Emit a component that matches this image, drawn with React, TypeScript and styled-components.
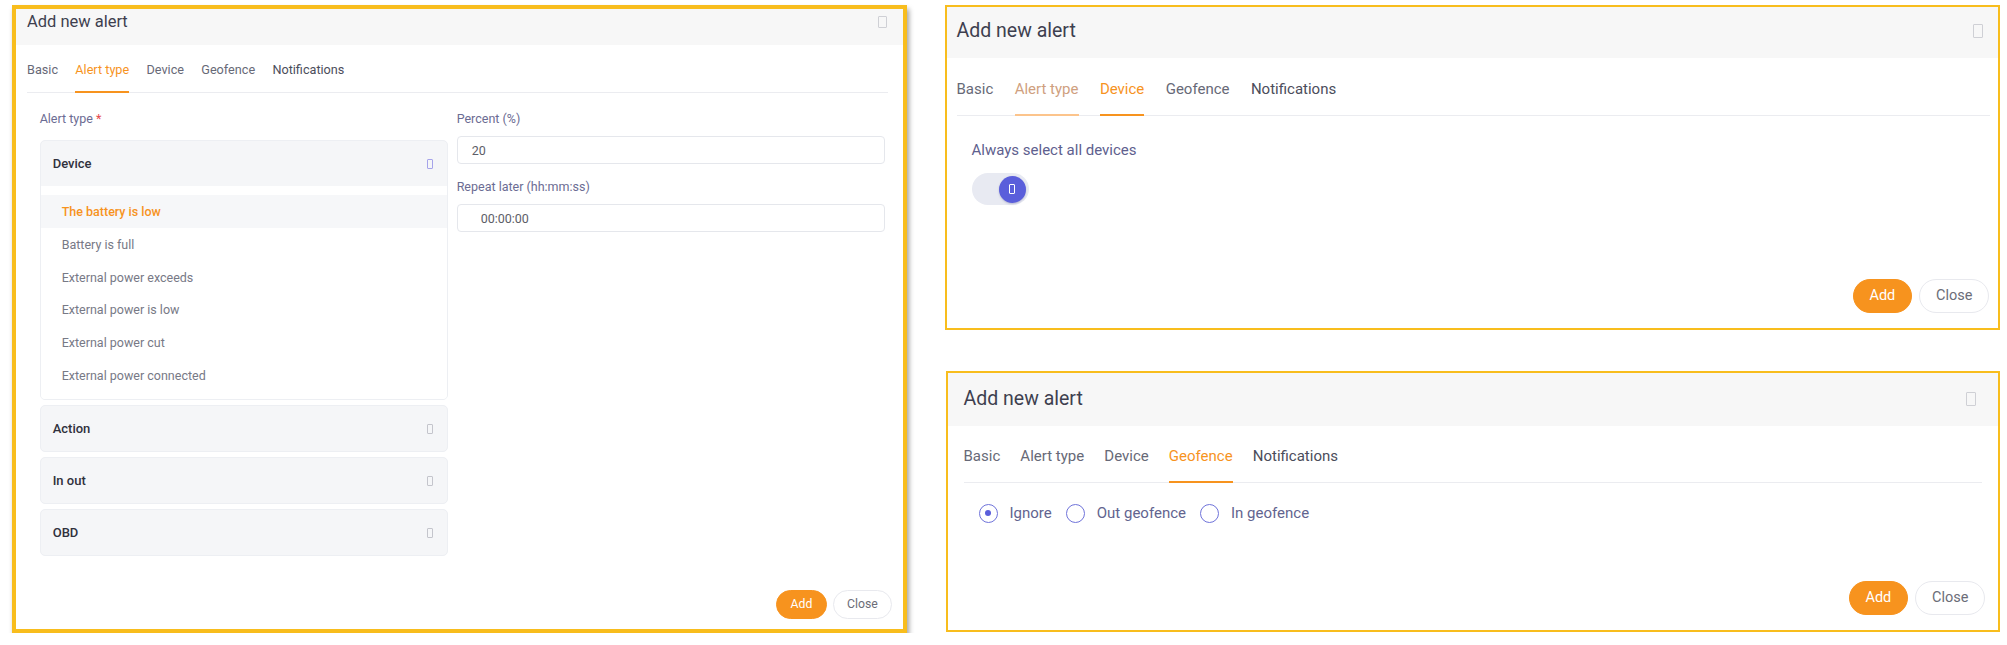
import React from "react";
import styled, { createGlobalStyle } from "styled-components";

const GlobalStyle = createGlobalStyle`
  html, body { margin: 0; padding: 0; background: #ffffff; }
  body { font-family: Roboto, "Noto Sans", Arial, sans-serif; -webkit-font-smoothing: antialiased; }
  * { box-sizing: border-box; }
`;

const u = (n: number) => `calc(var(--s) * ${n}px)`;

type Layout = {
  s: number; w: number; h: number; border: number; headerH: number; titleShift: number;
  padL: number; divR: number; iconR: number; footR: number; footB: number;
  tabTop: number; tabGap: number; bodyTop: number; shadow?: boolean;
};

const Page = styled.div`
  display: flex;
  align-items: flex-start;
  gap: 38px;
  padding: 5px 0 0 12px;
`;

const RightColumn = styled.div`
  display: flex;
  flex-direction: column;
  align-items: flex-end;
  gap: 41px;
`;

const Frame = styled.section<{ $l: Layout }>`
  --s: ${(p) => p.$l.s};
  width: ${(p) => p.$l.w}px;
  height: ${(p) => p.$l.h}px;
  border: ${(p) => p.$l.border}px solid #f8bd1d;
  background: #fff;
  display: flex;
  flex-direction: column;
  box-shadow: ${(p) => (p.$l.shadow ? "2px 4px 5px rgba(0,0,0,0.38)" : "none")};
`;

const Header = styled.header<{ $l: Layout }>`
  height: ${(p) => p.$l.headerH}px;
  flex: none;
  background: #f7f7f7;
  display: flex;
  align-items: center;
  justify-content: space-between;
  padding: 0 ${(p) => p.$l.iconR}px ${(p) => p.$l.titleShift}px ${(p) => p.$l.padL}px;
`;

const Title = styled.h2`
  margin: 0;
  font-size: ${u(19.5)};
  line-height: 1.2;
  font-weight: 400;
  color: #3e3f4f;
`;

const CloseGlyph = styled.span`
  width: ${u(10.5)};
  height: ${u(13.5)};
  border: 1.5px solid #cfd0d5;
  border-radius: 1px;
  display: block;
`;

const TabBar = styled.nav<{ $l: Layout }>`
  flex: none;
  display: flex;
  gap: ${(p) => p.$l.tabGap}px;
  margin: ${(p) => p.$l.tabTop}px ${(p) => p.$l.divR}px 0 ${(p) => p.$l.padL}px;
  border-bottom: 1px solid #ebecf0;
`;

const Tab = styled.span<{ $state: "idle" | "active" | "fading"; $strong?: boolean }>`
  font-size: ${u(15)};
  line-height: ${u(17.5)};
  padding-bottom: ${u(15.7)};
  margin-bottom: -1px;
  border-bottom: 2px solid
    ${(p) => (p.$state === "active" ? "#f7931e" : p.$state === "fading" ? "#fcc48c" : "transparent")};
  color: ${(p) =>
    p.$state === "active" ? "#f7931e" : p.$state === "fading" ? "#cf9f80" : p.$strong ? "#4b4d5b" : "#676977"};
`;

const Body = styled.div<{ $l: Layout }>`
  flex: 1;
  padding: ${(p) => p.$l.bodyTop}px 0 0 calc(${(p) => p.$l.padL}px + ${u(15)});
`;

const Footer = styled.footer<{ $l: Layout }>`
  flex: none;
  display: flex;
  justify-content: flex-end;
  gap: ${u(7.5)};
  padding: 0 ${(p) => p.$l.footR}px ${(p) => p.$l.footB}px 0;
`;

const PillButton = styled.button<{ $primary?: boolean }>`
  height: ${u(34.5)};
  padding: 0 ${u(15.6)};
  border-radius: 999px;
  font-family: Roboto, Arial, sans-serif;
  font-size: ${u(14.5)};
  border: 1px solid ${(p) => (p.$primary ? "#f7931e" : "#e8e9ee")};
  background: ${(p) => (p.$primary ? "#f7931e" : "#ffffff")};
  color: ${(p) => (p.$primary ? "#ffffff" : "#6b6d78")};
  cursor: pointer;
`;

/* ---------- Alert type tab (left) ---------- */

const FormGrid = styled.div`
  display: grid;
  grid-template-columns: 408px 428px;
  column-gap: 9px;
  align-items: start;
`;

const Column = styled.div`
  display: flex;
  flex-direction: column;
`;

const FieldLabel = styled.label<{ $gap: number }>`
  font-size: 12.5px;
  line-height: 15px;
  color: #6b6c93;
  margin-bottom: ${(p) => p.$gap}px;
  display: block;
`;

const Required = styled.span`
  color: #e5484d;
  margin-left: 3px;
`;

const TextInput = styled.div<{ $indent: number }>`
  height: 28px;
  border: 1px solid #e5e7ec;
  border-radius: 4px;
  padding-left: ${(p) => p.$indent}px;
  display: flex;
  align-items: center;
  font-size: 12.5px;
  color: #5d5e68;
  margin-bottom: 15px;
`;

const Accordion = styled.div`
  display: flex;
  flex-direction: column;
  gap: 5px;
`;

const Section = styled.div`
  border: 1px solid #edeff3;
  border-radius: 5px;
  overflow: hidden;
  background: #f5f6f8;
`;

const SectionHeader = styled.div`
  height: 45px;
  display: flex;
  align-items: center;
  justify-content: space-between;
  padding: 0 14px 0 12px;
  font-size: 13px;
  font-weight: 500;
  color: #30313d;
`;

const ToggleGlyph = styled.span<{ $open?: boolean }>`
  width: 6px;
  height: 10px;
  border: 1px solid ${(p) => (p.$open ? "#a6a4ea" : "#c4c5cc")};
  border-radius: 1px;
  display: block;
`;

const List = styled.ul`
  list-style: none;
  margin: 0;
  padding: 9px 0 8px;
  background: #fff;
`;

const Item = styled.li<{ $active?: boolean }>`
  height: 32.7px;
  display: flex;
  align-items: center;
  padding-left: 21px;
  font-size: 12.5px;
  font-weight: ${(p) => (p.$active ? 500 : 400)};
  color: ${(p) => (p.$active ? "#f7931e" : "#777986")};
  background: ${(p) => (p.$active ? "#f6f7f9" : "transparent")};
`;

/* ---------- Device tab (top right) ---------- */

const PlainLabel = styled.div`
  font-size: 15px;
  line-height: 17.5px;
  color: #5e608e;
  margin-bottom: 14px;
`;

const Switch = styled.div`
  width: 57px;
  height: 32px;
  border-radius: 16px;
  background: #e8eaf2;
  display: flex;
  align-items: center;
  justify-content: flex-end;
  padding-right: 3px;
`;

const Knob = styled.span`
  width: 27px;
  height: 27px;
  border-radius: 50%;
  background: #5a5edb;
  display: flex;
  align-items: center;
  justify-content: center;
  box-shadow: 0 1px 2px rgba(40, 40, 120, 0.25);
`;

const KnobGlyph = styled.span`
  width: 6px;
  height: 10px;
  border: 1px solid #ffffff;
  border-radius: 1px;
  display: block;
`;

/* ---------- Geofence tab (bottom right) ---------- */

const RadioRow = styled.div`
  display: flex;
  align-items: center;
  margin-top: -4px;
`;

const RadioDot = styled.span<{ $checked?: boolean }>`
  width: 19px;
  height: 19px;
  border-radius: 50%;
  border: 1.5px solid #6f73da;
  display: flex;
  align-items: center;
  justify-content: center;
  margin-right: 12px;
  &::after {
    content: "";
    width: 6px;
    height: 6px;
    border-radius: 50%;
    background: ${(p) => (p.$checked ? "#5a5edb" : "transparent")};
  }
`;

const RadioLabel = styled.span`
  font-size: 15px;
  color: #62648f;
  margin-right: 14px;
`;

const TABS = ["Basic", "Alert type", "Device", "Geofence", "Notifications"];

type TabState = "idle" | "active" | "fading";

function Dialog({
  l,
  tabs,
  children,
}: {
  l: Layout;
  tabs: Record<string, TabState>;
  children: React.ReactNode;
}) {
  return (
    <Frame $l={l}>
      <Header $l={l}>
        <Title>Add new alert</Title>
        <CloseGlyph />
      </Header>
      <TabBar $l={l}>
        {TABS.map((t) => (
          <Tab key={t} $state={tabs[t] || "idle"} $strong={t === "Notifications"}>
            {t}
          </Tab>
        ))}
      </TabBar>
      <Body $l={l}>{children}</Body>
      <Footer $l={l}>
        <PillButton $primary>Add</PillButton>
        <PillButton>Close</PillButton>
      </Footer>
    </Frame>
  );
}

const LEFT: Layout = {
  s: 0.845, w: 895, h: 628, border: 4, headerH: 36, titleShift: 10,
  padL: 11, divR: 15, iconR: 16, footR: 11, footB: 10, tabTop: 18.3, tabGap: 17.3, bodyTop: 18, shadow: true,
};
const TOP: Layout = {
  s: 1, w: 1055, h: 325, border: 2, headerH: 51, titleShift: 3,
  padL: 9.5, divR: 8, iconR: 15, footR: 9, footB: 15, tabTop: 22.5, tabGap: 21.4, bodyTop: 26,
};
const BOTTOM: Layout = {
  s: 1, w: 1054, h: 261, border: 2, headerH: 53, titleShift: 1,
  padL: 15.5, divR: 16, iconR: 22, footR: 13, footB: 15, tabTop: 22, tabGap: 20.1, bodyTop: 24.5,
};

const DEVICE_ITEMS = [
  "The battery is low",
  "Battery is full",
  "External power exceeds",
  "External power is low",
  "External power cut",
  "External power connected",
];

export default function App() {
  return (
    <>
      <GlobalStyle />
      <Page>
        <Dialog l={LEFT} tabs={{ "Alert type": "active" }}>
          <FormGrid>
            <Column>
              <FieldLabel $gap={14}>
                Alert type<Required>*</Required>
              </FieldLabel>
              <Accordion>
                <Section>
                  <SectionHeader>
                    Device
                    <ToggleGlyph $open />
                  </SectionHeader>
                  <List>
                    {DEVICE_ITEMS.map((it, i) => (
                      <Item key={it} $active={i === 0}>
                        {it}
                      </Item>
                    ))}
                  </List>
                </Section>
                {["Action", "In out", "OBD"].map((s) => (
                  <Section key={s}>
                    <SectionHeader>
                      {s}
                      <ToggleGlyph />
                    </SectionHeader>
                  </Section>
                ))}
              </Accordion>
            </Column>
            <Column>
              <FieldLabel $gap={10}>Percent (%)</FieldLabel>
              <TextInput $indent={14}>20</TextInput>
              <FieldLabel $gap={10}>Repeat later (hh:mm:ss)</FieldLabel>
              <TextInput $indent={23}>00:00:00</TextInput>
            </Column>
          </FormGrid>
        </Dialog>
        <RightColumn>
          <Dialog l={TOP} tabs={{ "Alert type": "fading", Device: "active" }}>
            <PlainLabel>Always select all devices</PlainLabel>
            <Switch>
              <Knob>
                <KnobGlyph />
              </Knob>
            </Switch>
          </Dialog>
          <Dialog l={BOTTOM} tabs={{ Geofence: "active" }}>
            <RadioRow>
              <RadioDot $checked />
              <RadioLabel>Ignore</RadioLabel>
              <RadioDot />
              <RadioLabel>Out geofence</RadioLabel>
              <RadioDot />
              <RadioLabel>In geofence</RadioLabel>
            </RadioRow>
          </Dialog>
        </RightColumn>
      </Page>
    </>
  );
}
